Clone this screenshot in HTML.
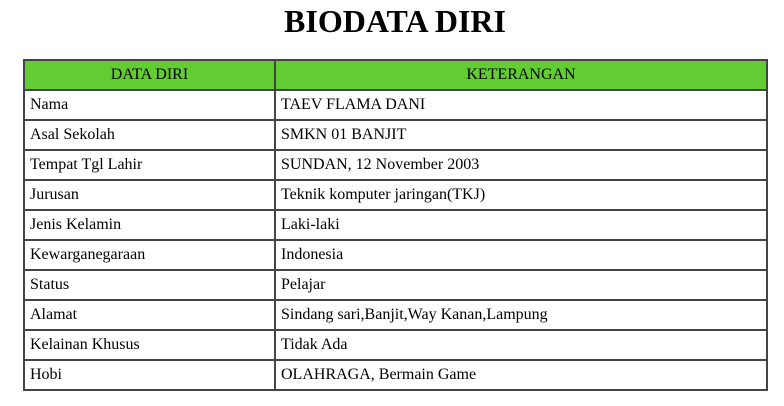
<!DOCTYPE html>
<html><head><style>
body{margin:0;background:#fff;font-family:"Liberation Serif",serif;}
h1{position:absolute;left:0;width:790px;top:1px;margin:0;text-align:center;font-size:32px;line-height:40px;font-weight:bold;}
table{position:absolute;left:23px;top:59px;width:745px;border-collapse:collapse;border:2px solid #444;font-size:16px;}
tr{height:30px;}
td,th{border:2px solid #444;padding:0 0 0 5px;text-align:left;font-weight:normal;}
th{background:#62cc33;text-align:center;padding:0;}
td:first-child{width:244px;}
</style></head><body>
<h1>BIODATA DIRI</h1>
<table>
<tr><th>DATA DIRI</th><th>KETERANGAN</th></tr>
<tr><td>Nama</td><td>TAEV FLAMA DANI</td></tr>
<tr><td>Asal Sekolah</td><td>SMKN 01 BANJIT</td></tr>
<tr><td>Tempat Tgl Lahir</td><td>SUNDAN, 12 November 2003</td></tr>
<tr><td>Jurusan</td><td>Teknik komputer jaringan(TKJ)</td></tr>
<tr><td>Jenis Kelamin</td><td>Laki-laki</td></tr>
<tr><td>Kewarganegaraan</td><td>Indonesia</td></tr>
<tr><td>Status</td><td>Pelajar</td></tr>
<tr><td>Alamat</td><td>Sindang sari,Banjit,Way Kanan,Lampung</td></tr>
<tr><td>Kelainan Khusus</td><td>Tidak Ada</td></tr>
<tr><td>Hobi</td><td>OLAHRAGA, Bermain Game</td></tr>
</table>
</body></html>
